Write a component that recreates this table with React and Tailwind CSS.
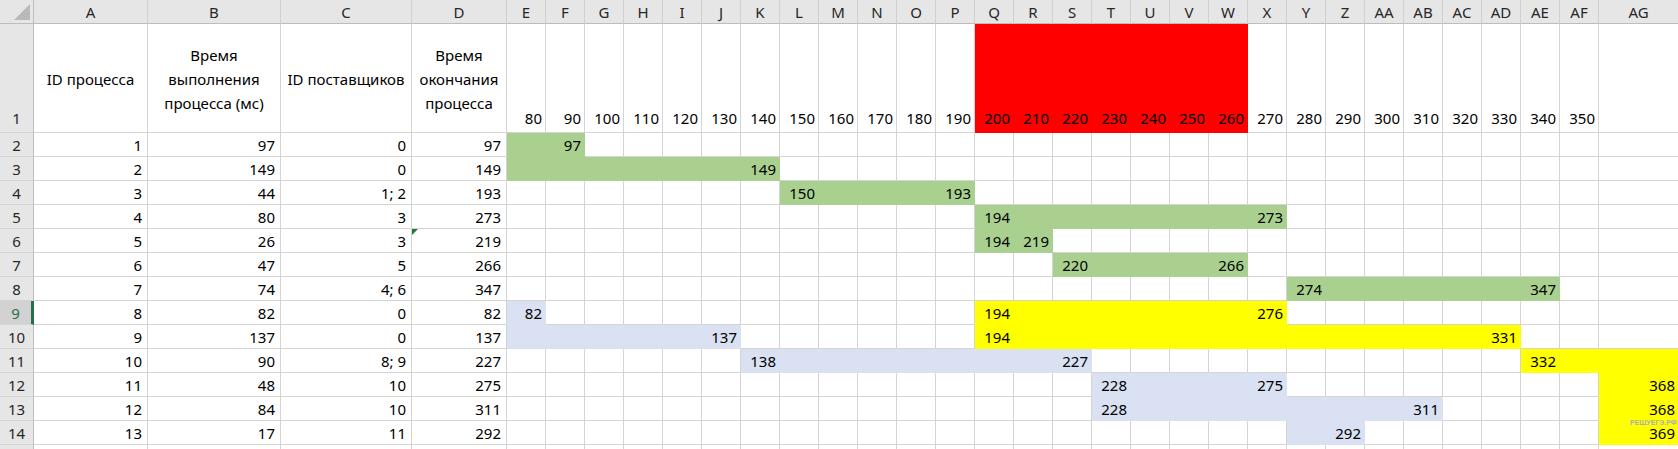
const LETTERS = ["A", "B", "C", "D", "E", "F", "G", "H", "I", "J", "K", "L", "M", "N", "O", "P", "Q", "R", "S", "T", "U", "V", "W", "X", "Y", "Z", "AA", "AB", "AC", "AD", "AE", "AF", "AG"];

// fill colours of the chart cells
const FILL = {
  g: "bg-[#a9d08e] border-[#a9d08e]",
  b: "bg-[#d9e1f2] border-[#d9e1f2]",
  y: "bg-[#ffff00] border-[#ffff00]",
  r: "bg-[#ff0000] border-[#ff0000]",
};

// index 0 = column E, 28 = column AG
const rows = [
  { n: 2, a: ["1", "97", "0", "97"], bars: [{ c: "g", from: 0, to: 1, t: { 1: "97" } }] },
  { n: 3, a: ["2", "149", "0", "149"], bars: [{ c: "g", from: 0, to: 6, t: { 6: "149" } }] },
  { n: 4, a: ["3", "44", "1; 2", "193"], bars: [{ c: "g", from: 7, to: 11, t: { 7: "150", 11: "193" } }] },
  { n: 5, a: ["4", "80", "3", "273"], bars: [{ c: "g", from: 12, to: 19, t: { 12: "194", 19: "273" } }] },
  { n: 6, a: ["5", "26", "3", "219"], bars: [{ c: "g", from: 12, to: 13, t: { 12: "194", 13: "219" } }], flag: true },
  { n: 7, a: ["6", "47", "5", "266"], bars: [{ c: "g", from: 14, to: 18, t: { 14: "220", 18: "266" } }] },
  { n: 8, a: ["7", "74", "4; 6", "347"], bars: [{ c: "g", from: 20, to: 26, t: { 20: "274", 26: "347" } }] },
  {
    n: 9, a: ["8", "82", "0", "82"], selected: true,
    bars: [{ c: "b", from: 0, to: 0, t: { 0: "82" } }, { c: "y", from: 12, to: 19, t: { 12: "194", 19: "276" } }],
  },
  {
    n: 10, a: ["9", "137", "0", "137"],
    bars: [{ c: "b", from: 0, to: 5, t: { 5: "137" } }, { c: "y", from: 12, to: 25, t: { 12: "194", 25: "331" } }],
  },
  {
    n: 11, a: ["10", "90", "8; 9", "227"],
    bars: [{ c: "b", from: 6, to: 14, t: { 6: "138", 14: "227" } }, { c: "y", from: 26, to: 28, t: { 26: "332" } }],
  },
  {
    n: 12, a: ["11", "48", "10", "275"],
    bars: [{ c: "b", from: 15, to: 19, t: { 15: "228", 19: "275" } }, { c: "y", from: 28, to: 28, t: { 28: "368" } }],
  },
  {
    n: 13, a: ["12", "84", "10", "311"],
    bars: [{ c: "b", from: 15, to: 23, t: { 15: "228", 23: "311" } }, { c: "y", from: 28, to: 28, t: { 28: "368" } }],
  },
  {
    n: 14, a: ["13", "17", "11", "292"],
    bars: [{ c: "b", from: 20, to: 21, t: { 21: "292" } }, { c: "y", from: 28, to: 28, t: { 28: "369" } }],
  },
];

const headTexts = [
  ["ID процесса"],
  ["Время", "выполнения", "процесса (мс)"],
  ["ID поставщиков"],
  ["Время", "окончания", "процесса"],
];

function chartCell(row, i) {
  for (const bar of row.bars) {
    if (i >= bar.from && i <= bar.to) return { fill: FILL[bar.c], text: bar.t[i] || "" };
  }
  return { fill: "border-[#d4d4d4]", text: "" };
}

function RowHead({ children, selected }) {
  return (
    <div
      className={`flex items-center justify-center pt-[2px] border-b border-[#d4d4d4] ${
        selected
          ? "bg-[#d2d2d2] text-[#217346] border-r-[3px] border-r-[#217346]"
          : "bg-[#e6e6e6] text-[#262626] border-r border-r-[#bdbdbd]"
      }`}
    >
      {children}
    </div>
  );
}

export default function App() {
  return (
    <div
      className="relative w-[1678px] h-[449px] overflow-hidden bg-white text-[15px] leading-none text-black"
      style={{ fontFamily: '"Noto Sans", "Open Sans", sans-serif' }}
    >
      <div className="grid grid-cols-[34px_114px_133px_131px_95px_repeat(28,39px)_80px] grid-rows-[24px_109px_repeat(14,24px)]">
        {/* column headers */}
        <div className="relative bg-[#e6e6e6] border-r border-b border-[#bdbdbd]">
          <div className="absolute right-[3px] bottom-[3px] w-0 h-0 border-l-[16px] border-l-transparent border-b-[16px] border-b-[#b9b9b9]"></div>
        </div>
        {LETTERS.map((l) => (
          <div
            key={l}
            className="flex items-center justify-center pt-[1px] bg-[#e6e6e6] text-[#262626] border-r border-b border-r-[#d0d0d0] border-b-[#bdbdbd]"
          >
            {l}
          </div>
        ))}

        {/* row 1 */}
        <div className="flex items-end justify-center pb-[6px] bg-[#e6e6e6] text-[#262626] border-r border-b border-r-[#bdbdbd] border-b-[#d4d4d4]">
          1
        </div>
        {headTexts.map((lines, i) => (
          <div key={i} className="flex flex-col items-center justify-center gap-[9px] pt-[2px] text-center border-r border-b border-[#d4d4d4]">
            {lines.map((t) => (
              <span key={t} className="whitespace-nowrap">{t}</span>
            ))}
          </div>
        ))}
        {LETTERS.slice(4).map((l, i) => {
          const red = i >= 12 && i <= 18;
          return (
            <div
              key={l}
              className={`flex items-end justify-end pr-[3px] pb-[6px] border-r border-b ${red ? FILL.r : "border-[#d4d4d4]"}`}
            >
              {i < 28 ? 80 + i * 10 : ""}
            </div>
          );
        })}

        {/* data rows */}
        {rows.map((row) => (
          <div key={row.n} className="contents">
            <RowHead selected={row.selected}>{row.n}</RowHead>
            {row.a.map((v, i) => (
              <div key={i} className="relative flex items-center justify-end pr-[5px] pt-[2px] border-r border-b border-[#d4d4d4]">
                {row.flag && i === 3 && (
                  <div className="absolute left-0 top-0 w-0 h-0 border-t-[6px] border-t-[#1e7b30] border-r-[6px] border-r-transparent"></div>
                )}
                {v}
              </div>
            ))}
            {LETTERS.slice(4).map((l, i) => {
              const cell = chartCell(row, i);
              return (
                <div key={l} className={`flex items-center justify-end pr-[3px] pt-[2px] border-r border-b ${cell.fill}`}>
                  {cell.text}
                </div>
              );
            })}
          </div>
        ))}

        {/* row 15, only its top edge shows */}
        <div className="bg-[#e6e6e6] border-r border-b border-r-[#bdbdbd] border-b-[#d4d4d4]"></div>
        {LETTERS.map((l) => (
          <div key={l} className="border-r border-b border-[#d4d4d4]"></div>
        ))}
      </div>

      {/* watermark */}
      <div
        className="absolute left-[1630px] top-[419px] whitespace-nowrap text-[7px] font-bold text-[#b0b0b0]"
        style={{ fontFamily: '"Liberation Sans", sans-serif' }}
      >
        РЕШУЕГЭ.РФ
      </div>
    </div>
  );
}
